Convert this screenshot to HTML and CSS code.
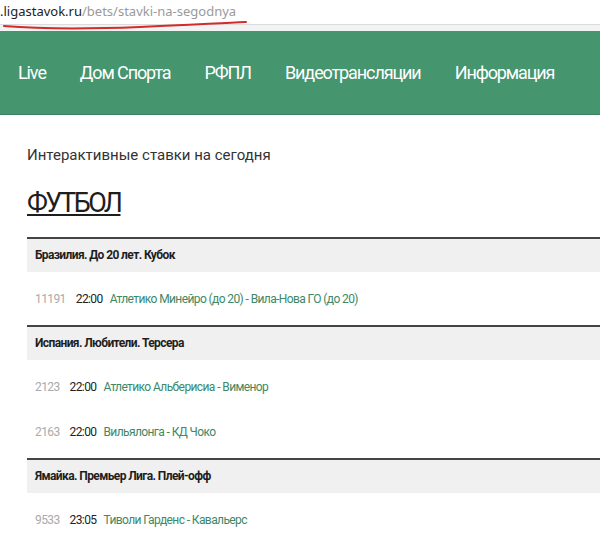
FILE: index.html
```html
<!DOCTYPE html>
<html lang="ru">
<head>
  <meta charset="UTF-8">
  <title>Ставки на сегодня</title>
  <link rel="stylesheet" href="styles.css">
</head>
<body>

  <div class="urlbar">
    <span class="host">.ligastavok.ru</span><span class="path">/bets/stavki-na-segodnya</span>
    <svg class="mark" width="260" height="12" viewBox="0 0 260 12">
      <path d="M4 5 C 40 8, 90 8, 140 6 S 220 2, 246 1" fill="none" stroke="#d42a2a" stroke-width="2" stroke-linecap="round"/>
    </svg>
  </div>
  <div class="strip"></div>

  <nav class="menu">
    <a href="#">Live</a>
    <a href="#">Дом Спорта</a>
    <a href="#">РФПЛ</a>
    <a href="#">Видеотрансляции</a>
    <a href="#">Информация</a>
  </nav>

  <div class="content">
    <p class="subtitle">Интерактивные ставки на сегодня</p>
    <h1 class="sport"><a href="#">ФУТБОЛ</a></h1>

    <div class="league">
      <div class="league-head">Бразилия. До 20 лет. Кубок</div>
      <div class="events">
        <div class="event">
          <span class="num">11191</span>
          <span class="time">22:00</span>
          <a href="#" class="teams">Атлетико Минейро (до 20) - Вила-Нова ГО (до 20)</a>
        </div>
      </div>
    </div>

    <div class="league">
      <div class="league-head">Испания. Любители. Терсера</div>
      <div class="events">
        <div class="event">
          <span class="num">2123</span>
          <span class="time">22:00</span>
          <a href="#" class="teams">Атлетико Альберисиа - Вименор</a>
        </div>
        <div class="event">
          <span class="num">2163</span>
          <span class="time">22:00</span>
          <a href="#" class="teams">Вильялонга - КД Чоко</a>
        </div>
      </div>
    </div>

    <div class="league">
      <div class="league-head">Ямайка. Премьер Лига. Плей-офф</div>
      <div class="events">
        <div class="event">
          <span class="num">9533</span>
          <span class="time">23:05</span>
          <a href="#" class="teams">Тиволи Гарденс - Кавальерс</a>
        </div>
      </div>
    </div>
  </div>

</body>
</html>
```

FILE: styles.css
```css
body {
  margin: 0;
  background: #fff;
  font-family: Roboto, "Noto Sans", sans-serif;
  color: #333;
}

.urlbar {
  position: relative;
  height: 24px;
  border-bottom: 1px solid #dcdcdc;
  font-family: "Noto Sans", sans-serif;
  font-size: 13px;
  line-height: 22px;
  white-space: nowrap;
}

.urlbar .host {
  color: #222;
}

.urlbar .path {
  color: #9a9a9a;
}

.mark {
  position: absolute;
  left: 0;
  top: 21px;
}

.strip {
  height: 6px;
  background: #f1f4f2;
}

.menu {
  display: flex;
  align-items: center;
  height: 83px;
  padding-left: 18px;
  background: #45956f;
  border-bottom: 1px solid #3a7f5f;
  white-space: nowrap;
}

.menu a {
  flex-shrink: 0;
  color: #fff;
  text-decoration: none;
  font-size: 18px;
  letter-spacing: -1.1px;
  margin-right: 34px;
}

.content {
  padding: 30px 0 0 27px;
}

.subtitle {
  margin: 0;
  font-size: 15px;
  line-height: 20px;
  color: #333;
}

.sport {
  margin: 21px 0 17px;
  font-size: 27px;
  font-weight: normal;
  letter-spacing: -2.5px;
  line-height: 34px;
}

.sport a {
  color: #1e1e1e;
}

.league-head {
  border-top: 2px solid #444;
  background: #f0f0f0;
  height: 33px;
  line-height: 33px;
  padding-left: 8px;
  font-size: 12px;
  font-weight: bold;
  letter-spacing: -0.6px;
  color: #1e1e1e;
}

.events {
  padding: 4px 0;
}

.event {
  display: flex;
  align-items: center;
  height: 45px;
  padding-left: 8px;
  font-size: 12px;
  letter-spacing: -0.6px;
}

.num {
  color: #aaa;
  margin-right: 10px;
}

.time {
  color: #222;
  margin-right: 7px;
}

.teams {
  color: #3d8866;
  text-decoration: none;
}
```
